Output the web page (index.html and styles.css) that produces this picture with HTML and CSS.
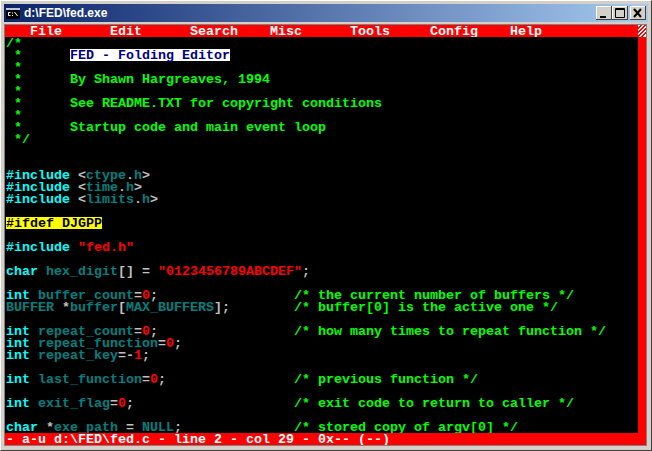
FILE: index.html
```
<!DOCTYPE html>
<html lang="en">
<head>
<meta charset="utf-8">
<title>d:\FED\fed.exe</title>
<link rel="stylesheet" href="styles.css">
</head>
<body>
<div class="window">
  <div class="titlebar">
    <svg class="appicon" width="14" height="11" viewBox="0 0 14 11"><rect width="14" height="11" fill="#000"/><rect x="0" y="0" width="14" height="2" fill="#c0c8e0"/><path d="M4.500 4.500h-2v3h2M6.500 4.500v1M6.500 7v1M8.500 4l3 4" fill="none" stroke="#fff" stroke-width="1"/></svg>
    <span class="title">d:\FED\fed.exe</span>
    <div class="controls">
      <div class="ctl"><svg width="16" height="14" viewBox="0 0 16 14"><rect x="4" y="10" width="6" height="2" fill="#000"/></svg></div>
      <div class="ctl"><svg width="16" height="14" viewBox="0 0 16 14"><path d="M3.500 2.500h9v9h-9z M3 3.500h10" fill="none" stroke="#000"/></svg></div>
      <div class="ctl ctl-close"><svg width="16" height="14" viewBox="0 0 16 14"><path d="M4 3l7 8M11 3l-7 8" fill="none" stroke="#000" stroke-width="2"/></svg></div>
    </div>
  </div>
  <div class="console">
    <div class="menubar">
      <pre class="menu">   File      Edit      Search    Misc      Tools     Config    Help</pre>
      <div class="corner"></div>
    </div>
    <div class="main">
<pre class="code"><span class="c">/*
 *      <span class="hl">FED - Folding Editor</span>
 *
 *      By Shawn Hargreaves, 1994
 *
 *      See README.TXT for copyright conditions
 *
 *      Startup code and main event loop
 */</span>


<span class="k">#include</span> <span class="o">&lt;</span><span class="i">ctype</span><span class="o">.</span><span class="i">h</span><span class="o">&gt;</span>
<span class="k">#include</span> <span class="o">&lt;</span><span class="i">time</span><span class="o">.</span><span class="i">h</span><span class="o">&gt;</span>
<span class="k">#include</span> <span class="o">&lt;</span><span class="i">limits</span><span class="o">.</span><span class="i">h</span><span class="o">&gt;</span>

<span class="y">#ifdef DJGPP</span>

<span class="k">#include</span> <span class="n">"fed.h"</span>

<span class="k">char</span> <span class="i">hex_digit</span><span class="o">[] =</span> <span class="n">"0123456789ABCDEF"</span><span class="o">;</span>

<span class="k">int</span> <span class="i">buffer_count</span><span class="o">=</span><span class="n">0</span><span class="o">;</span>                 <span class="c">/* the current number of buffers */</span>
<span class="i">BUFFER</span> <span class="o">*</span><span class="i">buffer</span><span class="o">[</span><span class="i">MAX_BUFFERS</span><span class="o">];</span>        <span class="c">/* buffer[0] is the active one */</span>

<span class="k">int</span> <span class="i">repeat_count</span><span class="o">=</span><span class="n">0</span><span class="o">;</span>                 <span class="c">/* how many times to repeat function */</span>
<span class="k">int</span> <span class="i">repeat_function</span><span class="o">=</span><span class="n">0</span><span class="o">;</span>
<span class="k">int</span> <span class="i">repeat_key</span><span class="o">=-</span><span class="n">1</span><span class="o">;</span>

<span class="k">int</span> <span class="i">last_function</span><span class="o">=</span><span class="n">0</span><span class="o">;</span>                <span class="c">/* previous function */</span>

<span class="k">int</span> <span class="i">exit_flag</span><span class="o">=</span><span class="n">0</span><span class="o">;</span>                    <span class="c">/* exit code to return to caller */</span>

<span class="k">char</span> <span class="o">*</span><span class="i">exe_path</span> <span class="o">=</span> <span class="i">NULL</span><span class="o">;</span>              <span class="c">/* stored copy of argv[0] */</span></pre>
      <div class="scrollbar"></div>
    </div>
    <pre class="status">- a-u d:\FED\fed.c - line 2 - col 29 - 0x-- (--)</pre>
  </div>
</div>
</body>
</html>
```
FILE: styles.css
```
html, body {
  margin: 0;
  padding: 0;
  background: #d4d0c8;
  overflow: hidden;
}
.window {
  width: 652px;
  height: 451px;
  box-sizing: border-box;
  padding: 3px 4px 4px 4px;
  background: #d4d0c8;
  border-right: 1px solid #404040;
  border-bottom: 1px solid #404040;
  border-left: 1px solid #fff;
  border-top: 1px solid #fff;
  display: flex;
  flex-direction: column;
}
.titlebar {
  height: 18px;
  margin: 0 -1px;
  padding-left: 2px;
  display: flex;
  align-items: center;
  gap: 4px;
  background: linear-gradient(90deg, #0a246a, #a6caf0);
}
.appicon { flex: none; }
.title {
  font: bold 12px/18px "Liberation Sans", sans-serif;
  color: #fff;
  white-space: pre;
}
.controls {
  margin-left: auto;
  margin-right: 2px;
  display: flex;
}
.ctl {
  width: 16px;
  height: 14px;
  background: #d4d0c8;
  box-shadow: inset -1px -1px 0 #404040, inset 1px 1px 0 #fff;
}
.ctl-close { margin-left: 2px; }
.ctl svg { display: block; }
.console {
  margin-top: 3px;
  width: 641px;
  height: 420px;
  background: #f00;
  outline: 1px solid #808080;
  display: flex;
  flex-direction: column;
}
pre {
  margin: 0;
  padding-top: 1px;
  box-sizing: border-box;
  font-family: "Liberation Mono", monospace;
  font-size: 13.333px;
  line-height: 12px;
  font-weight: bold;
  white-space: pre;
}
.menubar {
  height: 12px;
  display: flex;
  justify-content: space-between;
  flex: none;
}
.menu { color: #fff; padding-left: 1px; height: 12px; overflow: hidden; }
.corner {
  width: 8px;
  height: 12px;
  background: repeating-linear-gradient(135deg, #fff 0 1.5px, #f00 1.5px 3px);
}
.main {
  display: flex;
  height: 396px;
  flex: none;
}
.code {
  flex: 1;
  background: #000;
  color: #c0c0c0;
  padding-left: 1px;
  overflow: hidden;
}
.scrollbar {
  width: 8px;
  flex: none;
  background: #f00;
}
.status { color: #fff; padding-left: 1px; height: 12px; overflow: hidden; }
.c { color: #0f0; }
.k { color: #0ff; }
.i { color: #008080; }
.o { color: #c0c0c0; }
.n { color: #f00; }
.hl, .y {
  display: inline-block;
  height: 11px;
  padding-top: 1px;
  margin-top: -1px;
}
.hl { background: #fff; color: #000080; }
.y { background: #ff0; color: #000; }
```
